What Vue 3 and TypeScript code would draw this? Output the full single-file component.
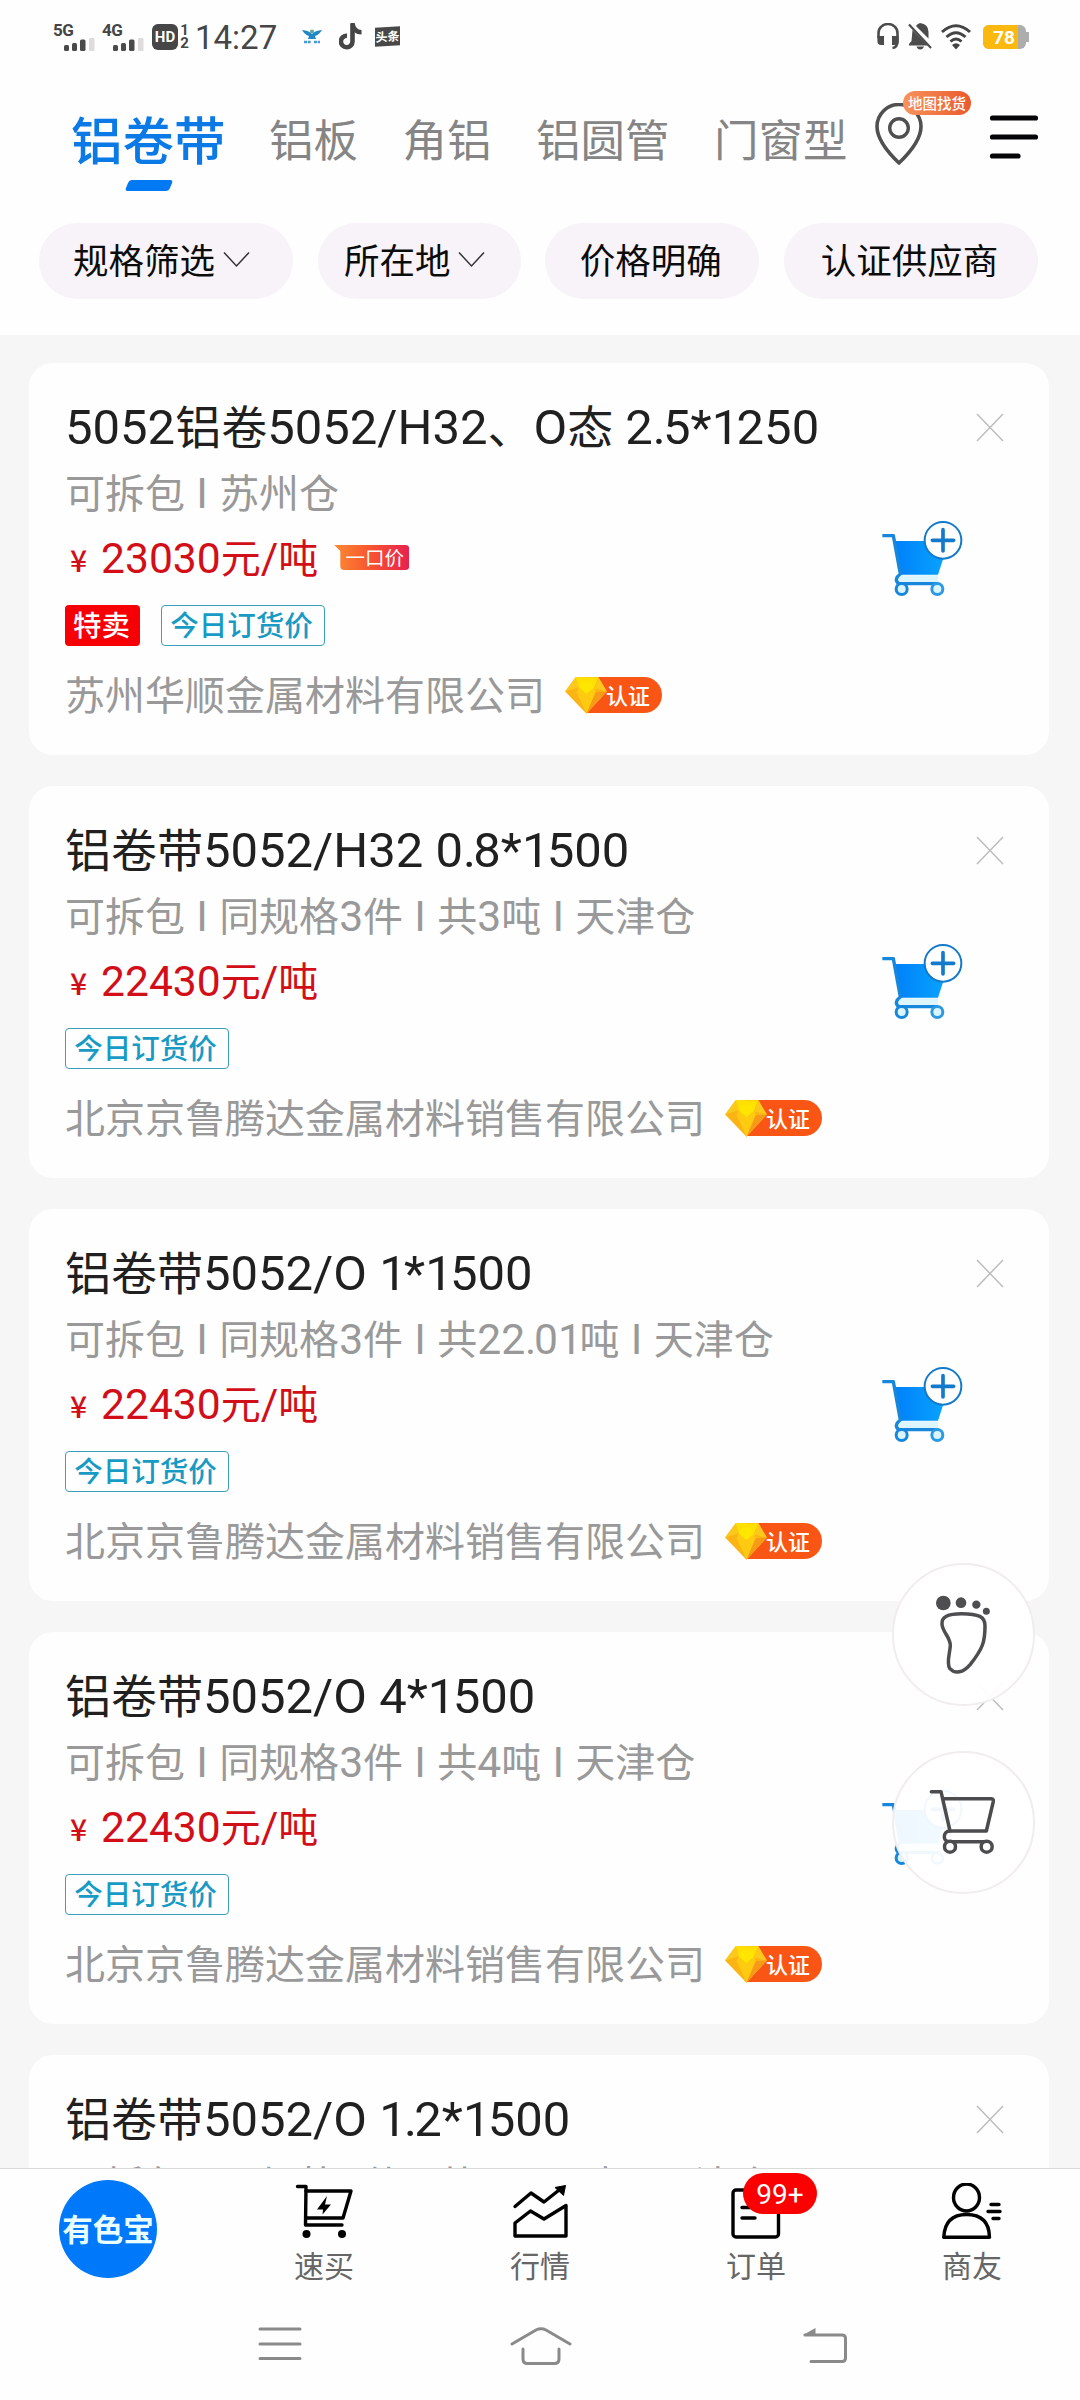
<script setup lang="ts">
import { h, type FunctionalComponent } from 'vue'

interface Offer {
  title: string
  spec: string
  price: string
  fixedPrice?: boolean
  special?: boolean
  company: string
}

const tabs: string[] = ['铝卷带', '铝板', '角铝', '铝圆管', '门窗型']

const filters = [
  { label: '规格筛选', arrow: true, size: 'wide' },
  { label: '所在地', arrow: true, size: 'small' },
  { label: '价格明确', arrow: false, size: 'medium' },
  { label: '认证供应商', arrow: false, size: 'wide' },
]

const beijing = '北京京鲁腾达金属材料销售有限公司'

const offers: Offer[] = [
  {
    title: '5052铝卷5052/H32、O态 2.5*1250',
    spec: '可拆包 I 苏州仓',
    price: '23030元/吨',
    fixedPrice: true,
    special: true,
    company: '苏州华顺金属材料有限公司',
  },
  { title: '铝卷带5052/H32 0.8*1500', spec: '可拆包 I 同规格3件 I 共3吨 I 天津仓', price: '22430元/吨', company: beijing },
  { title: '铝卷带5052/O 1*1500', spec: '可拆包 I 同规格3件 I 共22.01吨 I 天津仓', price: '22430元/吨', company: beijing },
  { title: '铝卷带5052/O 4*1500', spec: '可拆包 I 同规格3件 I 共4吨 I 天津仓', price: '22430元/吨', company: beijing },
  { title: '铝卷带5052/O 1.2*1500', spec: '可拆包 I 同规格3件 I 共22.01吨 I 天津仓', price: '22430元/吨', company: beijing },
]

// Latin runs are set slightly larger than the Chinese text around them,
// with the narrow glyphs (1 and the point) drawn tighter
const latinParts = (run: string) =>
  run.split(/([1.])/).map((part) => (part === '1' || part === '.' ? h('span', { class: 'narrow' }, part) : part))

const MixedText: FunctionalComponent<{ text: string }> = (props) =>
  h(
    'span',
    { class: 'mixed' },
    (props.text.match(/[\x20-\x7e]+|[^\x20-\x7e]+/g) ?? []).map((run) =>
      /^[\x20-\x7e]/.test(run) ? h('span', { class: 'latin' }, latinParts(run)) : run,
    ),
  )
MixedText.props = ['text']
</script>

<template>
  <div class="screen">
    <div class="status">
      <div class="status-left">
        <div class="signal">
          <b>5G</b>
          <svg width="31" height="13" viewBox="0 0 31 13"><g fill="#4a4a4a"><rect x="0" y="7" width="5" height="6" rx="1.5" /><rect x="8" y="5" width="5" height="8" rx="1.5" /><rect x="16" y="1.500" width="5.500" height="11.500" rx="1.500" /></g><rect x="25" y="0" width="5.500" height="13" rx="1" fill="#dedcdc" /></svg>
        </div>
        <div class="signal">
          <b>4G</b>
          <svg width="31" height="13" viewBox="0 0 31 13"><g fill="#4a4a4a"><rect x="0" y="7" width="5" height="6" rx="1.5" /><rect x="8" y="5" width="5" height="8" rx="1.5" /><rect x="16" y="1.500" width="5.500" height="11.500" rx="1.500" /></g><rect x="25" y="0" width="5.500" height="13" rx="1" fill="#dedcdc" /></svg>
        </div>
        <div class="hd">HD</div>
        <div class="sims"><span>1</span><span>2</span></div>
        <div class="time">14:27</div>
        <svg class="bird" width="20" height="16" viewBox="0 0 20 16"><path d="M0 1 Q7 1.500 10 5 Q13 1.500 20 1 Q17 6 13 7 L14 10 H6 L7 7 Q3 6 0 1Z" fill="#2288c4" /><circle cx="10" cy="2.500" r="2" fill="#58a9a0" /><path d="M2 13 H9 M12 13 H18" stroke="#4b9ad6" stroke-width="2.500" stroke-dasharray="3 .7" /></svg>
        <svg class="note" width="23" height="27" viewBox="0 0 23 27"><path d="M13.500 1 V18.500 A5.800 5.800 0 1 1 8 12.700" fill="none" stroke="#454545" stroke-width="4.600" /><path d="M11.200 0 H15.700 Q16.500 6.500 22.500 7 V11.600 Q18 11.500 15 9Z" fill="#454545" /></svg>
        <div class="toutiao">头条</div>
      </div>
      <div class="status-right">
        <svg width="22" height="27" viewBox="0 0 22 27"><path d="M1.500 15 V10 A9.500 9 0 0 1 20.500 10 V18 Q20.500 24.500 15.500 25" fill="none" stroke="#4c4c4c" stroke-width="2.600" /><path d="M.4 13 H7 V22 H4 Q.4 22 .4 18Z M15 13 H21.600 V20 L19 22 H15Z" fill="#4c4c4c" /></svg>
        <svg width="24" height="27" viewBox="0 0 24 27"><path d="M12 0 Q20.500 1 20.500 9 V15.500 L8 3 Q9 .8 12 0Z M4.500 7 L20 22.500 H1 V21 L3.500 18Z M8.500 23.500 H16 Q15 26.500 12.200 26.500 Q9.500 26.500 8.500 23.500Z" fill="#4c4c4c" /><path d="M1 1.500 L23 25" stroke="#4c4c4c" stroke-width="2.200" /></svg>
        <svg width="30" height="26" viewBox="0 0 30 26"><g fill="none" stroke="#444" stroke-width="3"><path d="M1 8 Q15 -4.500 29 8" /><path d="M5.500 13 Q15 4.500 24.500 13" /><path d="M9.500 17.500 Q15 12.500 20.500 17.500" /></g><path d="M11 21 Q15 17.500 19 21 L15 25.500Z" fill="#444" /></svg>
        <div class="battery"><div class="cell">78</div></div>
      </div>
    </div>

    <header class="category">
      <nav class="tabs">
        <div v-for="(tab, i) in tabs" :key="tab" class="tab" :class="{ active: i === 0 }">
          {{ tab }}
          <i v-if="i === 0" class="marker"></i>
        </div>
      </nav>
      <div class="map">
        <svg width="48" height="62" viewBox="0 0 48 62"><path d="M24 60 Q2 39 2 23.500 A22 22 0 0 1 46 23.500 Q46 39 24 60Z" fill="none" stroke="#505050" stroke-width="3.600" stroke-linejoin="round" /><circle cx="24" cy="25" r="9.300" fill="none" stroke="#505050" stroke-width="3.400" /></svg>
        <span class="map-badge">地图找货</span>
      </div>
      <svg class="menu" width="50" height="46" viewBox="0 0 50 46"><path d="M3.500 4 H46.500 M3.500 23 H46.500 M3.500 42 H29" stroke="#050508" stroke-width="5.200" stroke-linecap="round" /></svg>
    </header>

    <div class="filters">
      <div v-for="f in filters" :key="f.label" class="filter" :class="[f.size, { drop: f.arrow }]">
        <span>{{ f.label }}</span>
        <svg v-if="f.arrow" width="27" height="17" viewBox="0 0 27 17"><path d="M1 1.500 L13.500 15 L26 1.500" fill="none" stroke="#333" stroke-width="1.500" /></svg>
      </div>
    </div>

    <main class="list">
      <article v-for="offer in offers" :key="offer.title" class="card">
        <div class="info">
          <h2 class="title"><MixedText :text="offer.title" /></h2>
          <div class="spec"><MixedText :text="offer.spec" /></div>
          <div class="price">
            <span class="yen">¥</span>
            <MixedText :text="offer.price" />
            <span v-if="offer.fixedPrice" class="fixed">一口价</span>
          </div>
          <div class="tags">
            <span v-if="offer.special" class="tag special">特卖</span>
            <span class="tag order">今日订货价</span>
          </div>
          <div class="company">
            <span>{{ offer.company }}</span>
            <span class="cert">
              <svg width="42" height="37" viewBox="0 0 123 109"><path d="M31 1 H98 L123 43 L63 108 L0 43Z" fill="#fbb413" /><path d="M31 1 H98 L86 30 L63 47 L40 30Z" fill="#ffe000" /><path d="M0 43 L31 1 L40 30Z M98 1 L123 43 L86 34Z" fill="#fdc81c" /><path d="M40 30 H86 L90 45 L63 108 L34 45Z" fill="#ffcb10" /><path d="M40 30 L63 50 L86 30 L75 14 H50Z" fill="#ffe600" /><path d="M90 45 L123 43 L63 108Z" fill="#f79a1a" /></svg>
              <em>认证</em>
            </span>
          </div>
        </div>
        <div class="actions">
          <svg class="close" width="28" height="29" viewBox="0 0 28 29"><path d="M1 1 L27 28 M27 1 L1 28" stroke="#bdbdbd" stroke-width="1.500" /></svg>
          <svg class="add" width="85" height="80" viewBox="0 0 255 240">
            <defs><linearGradient id="cartFill" x1="0" x2="1"><stop offset="0" stop-color="#0080fa" /><stop offset="1" stop-color="#08a2ff" /></linearGradient></defs>
            <path d="M44 66 H190 V118 L174 167 H62Z" fill="url(#cartFill)" />
            <path d="M58 169 H174 V194 H54Z" fill="#dcf5ff" />
            <path d="M7 50 H40 L61 165 Q40 180 56 194 H175" fill="none" stroke="#1787dc" stroke-width="10" stroke-linejoin="round" />
            <circle cx="65" cy="210" r="16.500" fill="#d9f5ff" stroke="#1787dc" stroke-width="9" /><circle cx="172" cy="210" r="16.500" fill="#d9f5ff" stroke="#2c9ae0" stroke-width="9" />
            <circle cx="189" cy="64" r="55" fill="#fff" stroke="#1279cb" stroke-width="6" />
            <path d="M157 64 H221 M189 32 V96" stroke="#1279cb" stroke-width="11" stroke-linecap="round" />
          </svg>
        </div>
      </article>
    </main>

    <div class="floaters">
      <div class="float">
        <svg width="60" height="84" viewBox="285 160 180 252"><g fill="#4e4e50"><circle cx="313" cy="190" r="22" /><circle cx="366" cy="189" r="16" /><circle cx="412" cy="195" r="12.500" /><circle cx="442" cy="215" r="10.500" /></g><path d="M309 254 C307 232 326 222 368 222 C420 222 438 232 438 258 C438 306 432 326 394 374 C372 400 348 404 332 386 C322 370 332 344 334 318 C334 292 312 280 309 254Z" fill="none" stroke="#4e4e50" stroke-width="10.500" /></svg>
      </div>
      <div class="float cart">
        <svg width="68" height="68" viewBox="0 0 204 204"><g fill="none" stroke="#4c4c4e" stroke-width="10.500" stroke-linejoin="round" stroke-linecap="round"><path d="M13 14 H42 L69 132 H178 L199 43 Q200 36 193 35 H48" /><path d="M68 132 C48 132 46 164 66 164 H180" /><circle cx="69" cy="179" r="16.500" fill="#fff" /><circle cx="179" cy="179" r="16.500" fill="#fff" /></g></svg>
      </div>
    </div>

    <footer class="tabbar">
      <div class="item"><div class="logo">有色宝</div></div>
      <div class="item">
        <svg width="60" height="56" viewBox="0 0 60 56"><g fill="none" stroke="#000" stroke-width="3.400" stroke-linejoin="round" stroke-linecap="round"><path d="M3.500 3.500 H12 L11.500 42 H48" /><path d="M12 8 H57 L49 35 H12" /></g><path d="M33 13 L23 26.500 H29 L28.500 31.500 L37 21.500 H31Z" fill="#000" /><circle cx="12.500" cy="51" r="4" /><circle cx="48" cy="51" r="4" /></svg>
        <span>速买</span>
      </div>
      <div class="item">
        <svg width="60" height="56" viewBox="0 0 60 56"><g fill="none" stroke="#000" stroke-width="3.400" stroke-linejoin="round" stroke-linecap="round"><path d="M5 23.500 L21 10 L34 19 L51 5.500" /><path d="M5 53 V40 L20.500 28 L34 36 L56 22.500 V53Z" /></g><path d="M45 4.500 L55.500 2.500 L53.500 12.500Z" stroke="#000" stroke-linejoin="round" /></svg>
        <span>行情</span>
      </div>
      <div class="item">
        <svg width="60" height="56" viewBox="0 0 60 56"><g fill="none" stroke="#000" stroke-width="3.400" stroke-linecap="round"><rect x="7" y="7" width="45.500" height="47" rx="3" /><path d="M16 24.500 H40 M16 35 H29" /></g></svg>
        <span>订单</span>
        <b class="count">99+</b>
      </div>
      <div class="item">
        <svg width="60" height="56" viewBox="0 1 60 56"><g fill="none" stroke="#000" stroke-width="3.400" stroke-linejoin="round" stroke-linecap="round"><ellipse cx="24.500" cy="15.500" rx="13" ry="13.500" /><path d="M1.700 55.300 Q3 32.500 24.500 32.500 Q47 32.500 47.500 55.300Z" /><path d="M49 22.500 H57 M46 29.500 H58 M51 36.500 H57" /></g></svg>
        <span>商友</span>
      </div>
    </footer>

    <div class="sysnav">
      <svg width="44" height="36" viewBox="0 0 44 36"><path d="M2 3 H42 M2 18 H42 M2 32.500 H42" stroke="#8a8a8a" stroke-width="3" stroke-linecap="round" /></svg>
      <svg class="home" width="62" height="40" viewBox="0 0 62 40"><path d="M2 18 L26 4 Q31 1.500 36 4 L60 18 M13 23 V33 Q13 37.500 17.500 37.500 H44.500 Q49 37.500 49 33 V23" fill="none" stroke="#8a8a8a" stroke-width="3" stroke-linecap="round" /></svg>
      <svg class="back" width="46" height="40" viewBox="0 0 46 40"><path d="M3 9 H40 Q43.500 9 43.500 12.500 V32 Q43.500 35.500 40 35.500 H9" fill="none" stroke="#8a8a8a" stroke-width="3" stroke-linecap="round" /><path d="M1 9 L13.500 2 V9Z" fill="#8a8a8a" /></svg>
    </div>
  </div>
</template>

<style>
body {
  background: #fff;
}
.mixed {
  white-space: pre;
}
.mixed .latin {
  font-family: Roboto, 'Noto Sans CJK SC', sans-serif;
  font-size: 1.065em;
  line-height: 0;
}
.mixed .narrow {
  letter-spacing: -0.055em;
}
</style>

<style scoped>
.screen {
  position: relative;
  display: flex;
  flex-direction: column;
  width: 1080px;
  height: 2400px;
  overflow: hidden;
  background: #fefefe;
  font-family: 'Noto Sans CJK SC', sans-serif;
  color: #222;
}
svg {
  display: block;
  flex: none;
}

.status {
  display: flex;
  flex: none;
  justify-content: space-between;
  align-items: center;
  height: 73px;
  padding: 0 51px 0 53px;
}
.status-left,
.status-right {
  display: flex;
  align-items: center;
}
.signal {
  width: 40px;
  height: 28px;
  margin-right: 9px;
}
.signal b {
  display: block;
  font: 700 17px/15px Roboto, sans-serif;
  letter-spacing: -0.5px;
  color: #454545;
}
.signal svg {
  margin-left: 11px;
}
.hd {
  width: 26px;
  height: 26px;
  margin-left: 1px;
  border-radius: 6px;
  background: #464646;
  color: #fff;
  font: 700 15px/26px Roboto, sans-serif;
  text-align: center;
}
.sims {
  display: flex;
  flex-direction: column;
  width: 11px;
  margin-left: 1px;
  font: 700 15px/13px Roboto, sans-serif;
  color: #464646;
  text-align: center;
}
.time {
  width: 97px;
  margin-left: 5px;
  padding-top: 3px;
  font: 400 33px/36px Roboto, sans-serif;
  color: #464646;
}
.bird {
  margin-left: 10px;
}
.note {
  margin-left: 17px;
}
.toutiao {
  width: 25px;
  height: 19px;
  margin-left: 13px;
  background: #484848;
  color: #fff;
  font-size: 12px;
  font-weight: 700;
  line-height: 18px;
  text-align: center;
  transform: skewY(-3deg);
}
.status-right {
  gap: 9px;
}
.battery {
  display: flex;
  width: 43px;
  height: 24px;
  margin: 0 3px 0 3px;
  border-radius: 6px;
  background: #adadad;
  box-shadow: 3px 0 0 -7px #adadad, 10px 0 0 -7px #adadad;
}
.cell {
  width: 35px;
  border-radius: 6px 0 0 6px;
  background: #fbb80e;
  color: #fff;
  font: 700 19px/25px Roboto, sans-serif;
  text-indent: 10px;
}

.category {
  display: flex;
  flex: none;
  align-items: flex-start;
  height: 150px;
  padding-left: 71px;
}
.tabs {
  display: flex;
  align-items: center;
  gap: 44.500px;
  width: 804px;
  height: 130px;
  white-space: nowrap;
}
.tab {
  color: #858585;
  font-size: 44.500px;
  line-height: 60px;
}
.tab.active {
  position: relative;
  margin-right: -1px;
  color: #0b79e6;
  font-size: 51.500px;
  font-weight: 500;
}
.marker {
  position: absolute;
  top: 72px;
  left: 56px;
  width: 44px;
  height: 11px;
  border-radius: 3px;
  background: #0079f2;
  transform: skewX(-22deg);
}
.map {
  position: relative;
  margin-top: 30px;
}
.map-badge {
  position: absolute;
  top: -12px;
  left: 28px;
  width: 68px;
  height: 24px;
  border-radius: 12px;
  background: linear-gradient(90deg, #f8935b, #ea5a2e);
  color: #fff;
  font-size: 14.500px;
  font-weight: 500;
  line-height: 23px;
  text-align: center;
  white-space: nowrap;
}
.menu {
  margin: 41px 0 0 66px;
}

.filters {
  display: flex;
  flex: none;
  justify-content: space-between;
  height: 112px;
  padding: 0 42px 0 39px;
}
.filter {
  display: flex;
  justify-content: center;
  align-items: center;
  gap: 8px;
  box-sizing: border-box;
  height: 76px;
  padding-right: 3px;
  border-radius: 38px;
  background: #f7f3f8;
  color: #0c0c0c;
  font-size: 35.500px;
  line-height: 70px;
}
.filter.drop {
  padding-right: 9px;
}
.filter span {
  margin-top: -5px;
}
.filter svg {
  margin-top: -4px;
}
.filter.wide {
  width: 254px;
}
.filter.small {
  width: 203px;
}
.filter.medium {
  width: 214px;
}

.list {
  display: flex;
  flex: 1;
  flex-direction: column;
  gap: 31px;
  min-height: 0;
  overflow: hidden;
  padding: 28px 31px 0 29px;
  background: #f6f6f6;
}
.card {
  display: flex;
  flex: none;
  justify-content: space-between;
  box-sizing: border-box;
  height: 392px;
  padding: 34px 36px 0;
  border-radius: 24px;
  background: #fefefe;
  white-space: nowrap;
}
.title {
  height: 60px;
  margin: 0;
  color: #202020;
  font-size: 46px;
  font-weight: 400;
  line-height: 54px;
}
.spec {
  height: 60px;
  margin-top: 6px;
  color: #999;
  font-size: 40px;
  line-height: 56px;
  word-spacing: 0.700px;
}
.price {
  display: flex;
  height: 60px;
  margin-top: 6px;
  color: #d20f18;
  font-size: 40px;
  line-height: 55px;
}
.yen {
  width: 36px;
  font-size: 30px;
  font-weight: 500;
  line-height: 60px;
  text-indent: 5px;
}
.fixed {
  width: 69px;
  height: 25px;
  margin: 16px 0 0 16px;
  padding-left: 6px;
  background: linear-gradient(90deg, #fb8b32, #f9582f 45%, #e8214f);
  clip-path: path('M0 0 H71 Q75 0 75 4 V21 Q75 25 71 25 H10 Q6 25 6 21 V6Z');
  color: #fff;
  font-size: 19.500px;
  line-height: 23px;
  text-align: center;
}
.tags {
  display: flex;
  gap: 21px;
  height: 41px;
  margin-top: 16px;
}
.tag {
  box-sizing: border-box;
  border-radius: 4px;
  font-size: 28.500px;
  text-align: center;
}
.special {
  width: 75px;
  padding-right: 2px;
  background: #f60006;
  color: #fff;
  font-weight: 500;
  line-height: 38px;
}
.order {
  width: 164px;
  padding-right: 3px;
  border: 1.500px solid #3a9fb8;
  color: #179bc4;
  font-weight: 500;
  line-height: 36px;
}
.company {
  display: flex;
  align-items: center;
  height: 60px;
  margin-top: 19px;
  color: #999;
  font-size: 40px;
  line-height: 56px;
}
.company > span:first-child {
  margin-top: -4px;
}
.cert {
  display: flex;
  width: 97px;
  height: 36px;
  margin-left: 20px;
  border-radius: 0 18px 18px 0;
  background: linear-gradient(90deg, transparent 21px, #f95615 21px);
  color: #fff;
}
.cert em {
  margin-left: -1px;
  font-size: 22px;
  font-style: normal;
  font-weight: 500;
  line-height: 35px;
}
.actions {
  display: flex;
  flex-direction: column;
  align-items: flex-end;
}
.close {
  margin: 16px 9px 0 0;
}
.add {
  margin: 77px 48px 0 0;
}

.floaters {
  position: absolute;
  top: 1563px;
  left: 892px;
  display: flex;
  flex-direction: column;
  gap: 45px;
}
.float {
  display: flex;
  justify-content: center;
  align-items: center;
  box-sizing: border-box;
  width: 143px;
  height: 143px;
  border: 2px solid #f1edef;
  border-radius: 50%;
  background: rgba(255, 255, 255, 0.94);
}
.float.cart {
  padding: 0 5px 3px 0;
}

.tabbar {
  display: flex;
  flex: none;
  height: 139px;
  border-top: 1px solid #dadada;
}
.item {
  position: relative;
  display: flex;
  flex: 1;
  flex-direction: column;
  align-items: center;
  padding-top: 14px;
  color: #666;
  font-size: 30px;
  line-height: 40px;
}
.item > span {
  margin-top: 5px;
}
.logo {
  width: 98px;
  height: 98px;
  margin-top: -3px;
  border-radius: 50%;
  background: #0078fa;
  color: #eaffff;
  font-size: 30.500px;
  font-weight: 700;
  line-height: 97px;
  text-align: center;
}
.count {
  position: absolute;
  top: 4px;
  left: 95px;
  width: 74px;
  height: 41px;
  border-radius: 21px;
  background: #fb0000;
  color: #fff;
  font: 400 28px/43px Roboto, sans-serif;
  text-align: center;
}

.sysnav {
  display: flex;
  flex: none;
  align-items: flex-start;
  height: 74px;
  padding: 18px 0 0 258px;
}
.home {
  margin-left: 208px;
}
.back {
  margin-left: 230px;
}
</style>
